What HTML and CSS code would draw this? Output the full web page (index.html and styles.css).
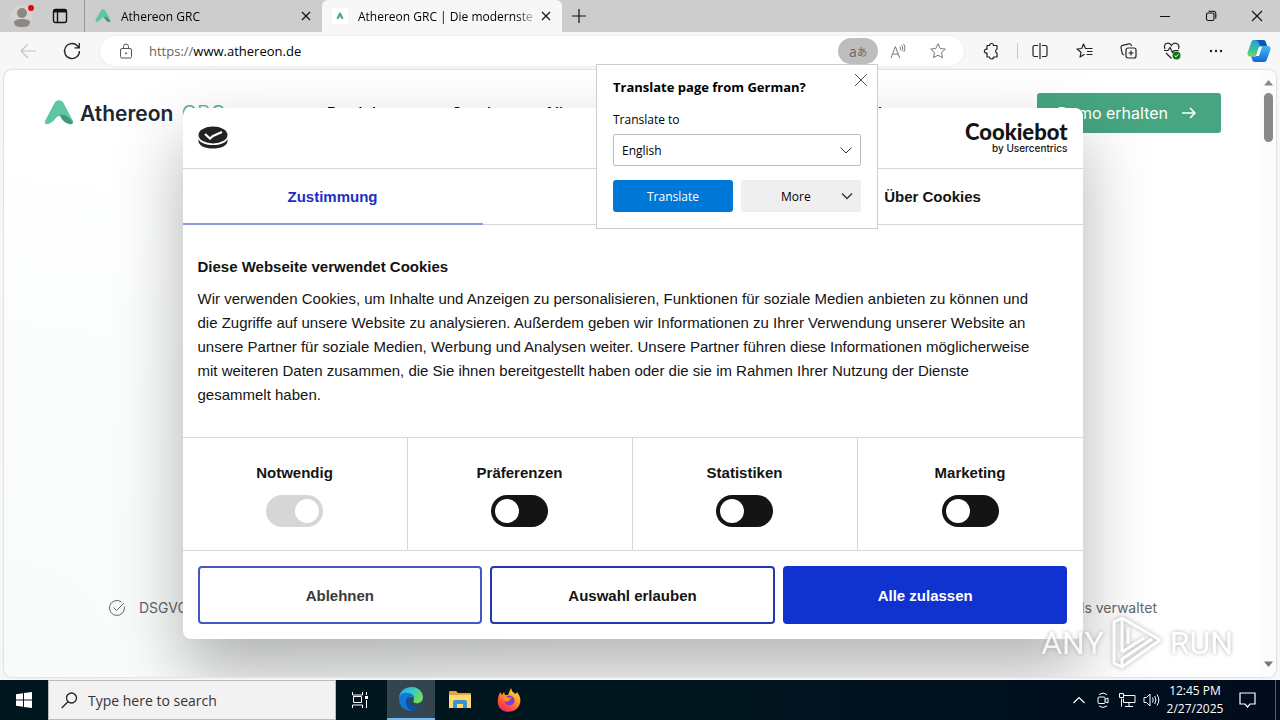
FILE: index.html
```html
<!DOCTYPE html>
<html lang="de">
<head>
    <meta charset="UTF-8">
    <meta name="viewport" content="width=device-width, initial-scale=1.0">
    <title>Athereon GRC</title>
    <link rel="stylesheet" href="styles.css">
</head>
<body>

<!-- Tabs -->
<div class="tab-strip">
    <button class="profile" aria-label="Profile">
        <svg width="24" height="24" viewBox="0 0 24 24"><circle cx="12" cy="12" r="11" fill="#d6d2d0"/><circle cx="12" cy="9" r="5" fill="#8c8886"/><path d="M4 18c0-4 16-4 16 0s-3 5-8 5-8-1-8-5z" fill="#8c8886"/><circle cx="21" cy="4" r="3" fill="#e30613"/></svg>
    </button>
    <button class="workspace" aria-label="Tab actions">
        <svg width="16" height="16" viewBox="0 0 16 16" fill="none" stroke="#111" stroke-width="1.4"><rect x="1.500" y="1.500" width="13" height="13" rx="2"/><path d="M1.500 3.500h13M5.500 4v10" /><path d="M2 3h12" stroke-width="2.500"/></svg>
    </button>
    <div class="tab">
        <svg class="favicon" width="16" height="16" viewBox="0 0 30 26"><path d="M10 4c2-5 8-5 10 0l9 17c1 3-2 4-4 3l-9-8c-4-1-5 6-12 8-2 1-4-1-3-3z" fill="#5fc5a2"/><path d="M17 15c4-2 8 2 12 8-2 3-9 1-12-8z" fill="#3e9a78"/></svg>
        <span class="tab-title">Athereon GRC</span>
        <button class="tab-close" aria-label="Close tab"><svg width="10" height="10" viewBox="0 0 10 10" stroke="#111" stroke-width="1.2"><path d="M1 1l8 8M9 1L1 9"/></svg></button>
    </div>
    <div class="tab active">
        <span class="favicon boxed"><svg width="8" height="8" viewBox="0 0 30 26"><path d="M11 3c2-4 6-4 8 0l10 20h-9l-5-9-5 9H1z" fill="#4aa885"/></svg></span>
        <span class="tab-title">Athereon GRC | Die modernste Lösung</span>
        <button class="tab-close" aria-label="Close tab"><svg width="10" height="10" viewBox="0 0 10 10" stroke="#111" stroke-width="1.2"><path d="M1 1l8 8M9 1L1 9"/></svg></button>
    </div>
    <button class="new-tab" aria-label="New tab"><svg width="14" height="14" viewBox="0 0 14 14" stroke="#111" stroke-width="1.2"><path d="M7 0v14M0 7h14"/></svg></button>
    <div class="window-controls">
        <button aria-label="Minimize"><svg width="12" height="12" viewBox="0 0 12 12" stroke="#111"><path d="M1 6.500h10"/></svg></button>
        <button aria-label="Restore"><svg width="12" height="12" viewBox="0 0 12 12" fill="none" stroke="#111" stroke-width="1.1"><rect x="1.500" y="3" width="7.500" height="7.500" rx="1.500"/><path d="M3.500 1.200h5a2.300 2.300 0 0 1 2.300 2.300v5"/></svg></button>
        <button aria-label="Close"><svg width="12" height="12" viewBox="0 0 12 12" stroke="#111" stroke-width="1.1"><path d="M1 1l10 10M11 1L1 11"/></svg></button>
    </div>
</div>

<!-- Toolbar -->
<div class="toolbar">
    <button class="tool" aria-label="Back"><svg width="16" height="16" viewBox="0 0 16 16" fill="none" stroke="#c4c4c4" stroke-width="1.2"><path d="M16 8H1M8 1L1 8l7 7"/></svg></button>
    <button class="tool" aria-label="Refresh"><svg width="18" height="18" viewBox="0 0 18 18" fill="none" stroke="#222" stroke-width="1.3"><path d="M16.500 9a7.500 7.500 0 1 1-2.200-5.300L16 5.500M16.300 1v4.800h-4.800"/></svg></button>
    <div class="address">
        <svg class="lock" width="14" height="16" viewBox="0 0 14 16" fill="none" stroke="#555"><rect x="1.500" y="5.500" width="11" height="9.500" rx="1.500"/><path d="M4.500 5.500V3.500a2.500 2.500 0 0 1 5 0v2"/><circle cx="7" cy="10.300" r=".6" fill="#555"/></svg>
        <a class="url" href="#"><span>https://</span>www.athereon.de</a>
        <div class="translate">
            <button class="pill" aria-label="Translate this page">a<span>あ</span></button>
            <form class="translate-popup">
                <div class="popup-title">
                    <strong>Translate page from German?</strong>
                    <button type="button" aria-label="Close"><svg width="14" height="14" viewBox="0 0 14 14" stroke="#555"><path d="M1 1l12 12M13 1L1 13"/></svg></button>
                </div>
                <label for="language">Translate to</label>
                <select id="language">
                    <option>English</option>
                    <option>German</option>
                </select>
                <div class="popup-buttons">
                    <button type="button" class="primary">Translate</button>
                    <button type="button" class="more">More<svg width="10" height="6" viewBox="0 0 10 6" fill="none" stroke="#333" stroke-width="1.3"><path d="M0 .5l5 5 5-5"/></svg></button>
                </div>
            </form>
        </div>
        <button class="address-icon" aria-label="Read aloud"><svg width="16" height="16" viewBox="0 0 18 18" fill="none" stroke="#777" stroke-width="1.1"><path d="M1 17L6 4l5 13M3 12.500h6.500M11 4c1 1 1 2.500.4 4M13 2.500c1.700 2 1.700 4.500.4 6.500M15 1c2.500 3 2 6.500.5 9"/></svg></button>
        <button class="address-icon" aria-label="Add to favorites"><svg width="16" height="16" viewBox="0 0 16 16" fill="none" stroke="#777" stroke-linejoin="round"><path d="M8 .8l2.200 4.700 5.100.6-3.800 3.500 1 5.100L8 12.200l-4.500 2.500 1-5.100L.7 6.100l5.100-.6z"/></svg></button>
    </div>
    <button class="tool" aria-label="Extensions"><svg width="16" height="16" viewBox="0 0 16 16" fill="none" stroke="#222" stroke-width="1.200" stroke-linejoin="round"><path d="M4 2.500h2.500a2 2 0 0 1 4 0H14v3.800a2 2 0 0 0 0 3.800v3.900h-3.500a2 2 0 0 1-4 0H4v-3.900a2 2 0 1 1 0-3.800z"/></svg></button>
    <span class="tool-divider"></span>
    <button class="tool" aria-label="Split screen"><svg width="16" height="16" viewBox="0 0 16 16" fill="none" stroke="#222" stroke-width="1.200"><path d="M6 2.500H2.500a1.500 1.500 0 0 0-1.500 1.500v8a1.500 1.500 0 0 0 1.500 1.500H6M10 2.500h3.500A1.500 1.500 0 0 1 15 4v8a1.500 1.500 0 0 1-1.500 1.500H10M8 0v16"/></svg></button>
    <button class="tool" aria-label="Favorites"><svg width="17" height="16" viewBox="0 0 17 16" fill="none" stroke="#222" stroke-width="1.200" stroke-linejoin="round"><path d="M8.500 11.300L4 14l1-4.700L1 6l4.700-.5L7.500 1l2 4.500h7M11 8.500h5.500M10.500 11.500h6"/></svg></button>
    <button class="tool" aria-label="Collections"><svg width="17" height="16" viewBox="0 0 17 16" fill="none" stroke="#222" stroke-width="1.200"><rect x="6" y="5" width="10" height="10" rx="2"/><path d="M11 7.500v5M8.500 10h5M4 12l-1-.5a2 2 0 0 1-.9-1.500L1 4.500A2 2 0 0 1 2.600 2.300L9 .8a2 2 0 0 1 2.300 1.500l.2.700"/></svg></button>
    <button class="tool" aria-label="Browser essentials"><svg width="18" height="17" viewBox="0 0 18 17" fill="none" stroke="#222" stroke-width="1.200"><path d="M2 6C-.5 0 6-1.500 8.500 2.500 11-1.500 17.500 0 15.500 6M3 10l5.500 5.500M1 7.500h4l2-3 2.500 5 1.700-2h4.500"/><circle cx="13.500" cy="12.500" r="4" fill="#107c10" stroke="none"/><path d="M11.700 12.500l1.300 1.300 2.300-2.400" stroke="#fff" stroke-width="1"/></svg></button>
    <button class="tool" aria-label="Settings and more"><svg width="14" height="4" viewBox="0 0 14 4" fill="#222"><circle cx="2" cy="2" r="1.200"/><circle cx="7" cy="2" r="1.200"/><circle cx="12" cy="2" r="1.200"/></svg></button>
    <button class="copilot" aria-label="Copilot">
        <svg width="24" height="24" viewBox="0 0 24 24">
            <defs>
                <linearGradient id="cp-left" x1="0" y1="0" x2="0" y2="1"><stop offset="0" stop-color="#2a9bdc"/><stop offset=".6" stop-color="#35c4a0"/><stop offset="1" stop-color="#8bd05b"/></linearGradient>
                <linearGradient id="cp-right" x1="0" y1="0" x2="0" y2="1"><stop offset="0" stop-color="#43bdf2"/><stop offset="1" stop-color="#1464d8"/></linearGradient>
            </defs>
            <path d="M7 1h9c2 0 2.500 1 3 3l1 3h-5c-2 0-3 1-3.500 3l-1.500 5c-.6 2-1.500 2.500-3 2.500H3c-2 0-3-2-2.400-4L4 4c.5-2 1.300-3 3-3z" fill="url(#cp-left)"/>
            <path d="M7 1h9c2 0 2.500 1 3 3l1 3h-5c-2 0-2.500-1-3-2-.5-2-1-4-5-4z" fill="#1456b8"/>
            <path d="M17 23H8c-2 0-2.500-1-3-3l-1-2.500h4c2 0 3-1 3.500-3L13 9.500c.6-2 1.500-2.500 3-2.500h5c2 0 3 2 2.400 4L20 20c-.5 2-1.300 3-3 3z" fill="url(#cp-right)"/>
            <path d="M12 8h3l-3 9H9z" fill="#fff"/>
        </svg>
    </button>
</div>

<!-- Website -->
<div class="viewport">
    <main class="page">
        <header class="site-header">
            <a class="logo" href="#">
                <svg width="30" height="26" viewBox="0 0 30 26"><path d="M10 4c2-5 8-5 10 0l9 17c1 3-2 4-4 3l-9-8c-4-1-5 6-12 8-2 1-4-1-3-3z" fill="#5fc5a2"/><path d="M16 15c5-1 9 2 13 8-4 3-11-1-13-8z" fill="#3e9a78"/></svg>
                <b>Athereon</b><span>GRC</span>
            </a>
            <nav class="site-nav">
                <a href="#">Produkt</a>
                <a href="#">Services</a>
                <a href="#">Alle</a>
                <a href="#">Portal</a>
            </nav>
            <a class="demo" href="#">Demo erhalten
                <svg width="14" height="12" viewBox="0 0 14 12" fill="none" stroke="#fff" stroke-width="1.500"><path d="M0 6h13M8 1l5 5-5 5"/></svg>
            </a>
        </header>

        <div class="features">
            <span><svg width="16" height="16" viewBox="0 0 16 16" fill="none" stroke="#666"><path d="M15.300 6.500A7.500 7.500 0 1 1 12.500 2M4.500 7.500L7.500 10.500 15 3"/></svg>DSGVO</span>
            <span>Tools verwaltet</span>
        </div>

        <div class="cookie-overlay">
            <section class="cookie-dialog" role="dialog" aria-label="Cookies">
                <div class="cookie-header">
                    <svg width="30" height="24" viewBox="0 0 30 24"><ellipse cx="15" cy="9" rx="14.500" ry="8.500" fill="#222"/><path d="M.5 13c3 8 26 8 29 0v2c0 10-29 10-29 0z" fill="#222"/><path d="M7 8l5 4.500 3-2.500 9-4" fill="none" stroke="#fff" stroke-width="2.200"/></svg>
                    <a class="cookiebot" href="#"><b>Cookiebot</b><span>by Usercentrics</span></a>
                </div>
                <div class="cookie-tabs">
                    <button class="selected">Zustimmung</button>
                    <button>Details</button>
                    <button>Über Cookies</button>
                </div>
                <div class="cookie-text">
                    <h2>Diese Webseite verwendet Cookies</h2>
                    <p>Wir verwenden Cookies, um Inhalte und Anzeigen zu personalisieren, Funktionen für soziale Medien anbieten zu können und<br>
                    die Zugriffe auf unsere Website zu analysieren. Außerdem geben wir Informationen zu Ihrer Verwendung unserer Website an<br>
                    unsere Partner für soziale Medien, Werbung und Analysen weiter. Unsere Partner führen diese Informationen möglicherweise<br>
                    mit weiteren Daten zusammen, die Sie ihnen bereitgestellt haben oder die sie im Rahmen Ihrer Nutzung der Dienste<br>
                    gesammelt haben.</p>
                </div>
                <div class="cookie-types">
                    <label>Notwendig<input type="checkbox" checked disabled></label>
                    <label>Präferenzen<input type="checkbox"></label>
                    <label>Statistiken<input type="checkbox"></label>
                    <label>Marketing<input type="checkbox"></label>
                </div>
                <div class="cookie-buttons">
                    <button class="deny">Ablehnen</button>
                    <button>Auswahl erlauben</button>
                    <button class="allow">Alle zulassen</button>
                </div>
            </section>
        </div>
    </main>
    <div class="scrollbar">
        <svg width="9" height="6" viewBox="0 0 9 6"><path d="M0 5.500L4.500 0 9 5.500z" fill="#888"/></svg>
        <span class="thumb"></span>
        <svg width="9" height="6" viewBox="0 0 9 6"><path d="M0 .5L4.500 6 9 .5z" fill="#777"/></svg>
    </div>
</div>

<div class="watermark">
    <span>ANY</span>
    <svg width="54" height="58" viewBox="0 0 54 58" fill="none" stroke="#fff" stroke-width="3" stroke-linejoin="round"><path d="M12 38V4l38 22-38 27-8-4V8l8-4M12 38l22-14M18 14v16M12 53v-8l30-20"/></svg>
    <span>RUN</span>
</div>

<!-- Taskbar -->
<footer class="taskbar">
    <button class="task start" aria-label="Start"><svg width="16" height="16" viewBox="0 0 16 16" fill="#fff"><path d="M0 2.200L7 1.200V7.500H0zM8 1l8-1v7.500H8zM0 8.500h7v6.300L0 13.800zM8 8.500h8V16l-8-1z"/></svg></button>
    <label class="search">
        <svg width="17" height="17" viewBox="0 0 17 17" fill="none" stroke="#222" stroke-width="1.300"><circle cx="10.500" cy="6" r="5"/><path d="M7 9.700L.7 16"/></svg>
        <input type="text" placeholder="Type here to search">
    </label>
    <button class="task" aria-label="Task view"><svg width="17" height="16" viewBox="0 0 17 16" fill="none" stroke="#fff"><path d="M.5 0v3h10V0M.5 16v-3h10v3M1.500 4.500h8v6h-8zM14.500 0v3M14.500 8v8"/><path d="M13 4h3v3h-3z" fill="#fff" stroke="none"/></svg></button>
    <button class="task running" aria-label="Edge">
        <svg width="24" height="24" viewBox="0 0 24 24">
            <defs>
                <linearGradient id="edge-top" x1="0" y1="0" x2="1" y2=".5"><stop offset="0" stop-color="#2aa5e0"/><stop offset=".5" stop-color="#35c8cf"/><stop offset="1" stop-color="#6fdc5c"/></linearGradient>
            </defs>
            <path d="M0 11C1-3 23-4 24 10c0 5-4 7-8 6-3-1-1-2-1-5 0-4-5-5-9-3-3 1-5 2-6 3z" fill="url(#edge-top)"/>
            <path d="M0 12c0-5 5-7 9-6 4 0 6 3 6 5-1-1-3-1-4 0-3 4 1 10 7 9 2 0 4-2 4-2-3 5-9 7-14 5-5-1-8-6-8-11z" fill="#1478d4"/>
            <path d="M9 10c-4 4-2 11 3 13.500 4 .5 8-1 10-5-3 2-7 2-10-1-2-2-2-5-1-7z" fill="#0c4f9e"/>
        </svg>
    </button>
    <button class="task" aria-label="File Explorer"><svg width="22" height="18" viewBox="0 0 22 18"><path d="M0 1q0-1 1-1h6l2 2h12q1 0 1 1v4H0z" fill="#e8a33d"/><path d="M0 4h22v13H0z" fill="#ffd970"/><path d="M4 17v-6q0-2 2-2h10q2 0 2 2v6h-4v-4H8v4z" fill="#3c92d4"/></svg></button>
    <button class="task" aria-label="Firefox">
        <svg width="24" height="24" viewBox="0 0 24 24">
            <defs>
                <linearGradient id="fox" x1=".8" y1="0" x2=".2" y2="1"><stop offset="0" stop-color="#ffe14a"/><stop offset=".4" stop-color="#ff9a26"/><stop offset=".75" stop-color="#ff4a3d"/><stop offset="1" stop-color="#e3247f"/></linearGradient>
            </defs>
            <path d="M3 4l2 3 2-3 1 3h3l3-7c1 4 3 5 5 6l1-2c3 4 4 7 3 11-2 11-20 12-22 1C0 10 2 8 3 4z" fill="url(#fox)"/>
            <circle cx="12.500" cy="12.500" r="5" fill="#7a3fd8"/><path d="M5 8c3-1 5 0 6 2l4-1-3 4c-2 1-4 1-5-1z" fill="#ff8a2a"/>
        </svg>
    </button>
    <div class="tray">
        <button aria-label="Hidden icons"><svg width="12" height="8" viewBox="0 0 12 8" fill="none" stroke="#fff" stroke-width="1.200"><path d="M.5 7L6 1.500 11.500 7"/></svg></button>
        <button aria-label="Meet now"><svg width="14" height="16" viewBox="0 0 14 16" fill="none" stroke="#fff"><rect x="2" y="5" width="7" height="6.500" rx="1"/><path d="M9 7.500l3-1.500v5l-3-1.500M3 2.500q4-3 8 0M3 14q4 3 8 0"/></svg></button>
        <button aria-label="Network"><svg width="17" height="14" viewBox="0 0 17 14" fill="none" stroke="#fff"><path d="M5 2.500h11v7H4.500v-4M10 9.500v4M6 13.500h8M2.500 5.500v8M.5.500h4v4h-4z"/></svg></button>
        <button aria-label="Volume"><svg width="17" height="14" viewBox="0 0 17 14" fill="none" stroke="#fff"><path d="M1 4.500h2.500L7 1v12L3.500 9.500H1zM9.500 4.500q1.500 2.500 0 5M11.700 3q2.500 4 0 8M14 1.500q3.700 5.500 0 11"/></svg></button>
        <div class="clock"><span>12:45 PM</span><span>2/27/2025</span></div>
        <button class="notifications" aria-label="Notifications"><svg width="17" height="16" viewBox="0 0 17 16" fill="none" stroke="#fff" stroke-width="1.200"><path d="M1 1h15v11h-5l-2.500 3L6 12H1z"/></svg></button>
    </div>
</footer>

</body>
</html>
```

FILE: styles.css
```css
* {
    box-sizing: border-box;
}

body {
    margin: 0;
    height: 100vh;
    display: flex;
    flex-direction: column;
    position: relative;
    overflow: hidden;
    background-color: #f7f7f7;
    color: #000;
    font-family: 'Open Sans', 'Noto Sans', sans-serif;
    font-size: 12px;
}

button,
input,
select {
    font: inherit;
    color: inherit;
}

button {
    display: flex;
    align-items: center;
    justify-content: center;
    padding: 0;
    border: none;
    background: none;
}

a {
    color: inherit;
    text-decoration: none;
}

svg {
    flex: none;
    overflow: visible;
}

/* Tabs */
.tab-strip {
    display: flex;
    height: 32px;
    flex: none;
    background-color: #cdcdcd;
}

.profile {
    width: 44px;
}

.workspace {
    width: 32px;
}

.tab {
    display: flex;
    align-items: center;
    width: 238px;
    padding: 0 8px 0 10px;
    margin-left: 8px;
    border-left: 1px solid #999;
}

.tab.active {
    width: 240px;
    margin: 0;
    border: none;
    border-radius: 6px 6px 0 0;
    background-color: #f7f7f7;
}

.favicon {
    width: 16px;
    height: 16px;
    margin-right: 10px;
    flex: none;
}

.boxed {
    display: flex;
    align-items: center;
    justify-content: center;
    background-color: #fff;
}

.tab-title {
    flex: 1;
    overflow: hidden;
    white-space: nowrap;
    mask-image: linear-gradient(to right, #000 88%, transparent);
}

.tab-close {
    width: 16px;
    height: 16px;
}

.new-tab {
    width: 34px;
}

.window-controls {
    display: flex;
    margin-left: auto;
}

.window-controls button {
    width: 46px;
}

/* Toolbar */
.toolbar {
    display: flex;
    align-items: center;
    height: 38px;
    flex: none;
    padding: 0 0 0 6px;
}

.tool {
    width: 44px;
    height: 30px;
}

.tool-divider {
    width: 1px;
    height: 16px;
    margin: 0 0 0 4px;
    background-color: #c8c8c8;
}

.copilot {
    width: 42px;
}

.address {
    display: flex;
    align-items: center;
    flex: 1;
    height: 30px;
    margin: 0 5px 0 6px;
    padding: 0 6px 0 19px;
    border-radius: 15px;
    background-color: #fff;
    box-shadow: 0 0 2px #ddd;
}

.url {
    flex: 1;
    margin-left: 16px;
    font-size: 13px;
}

.url span {
    color: #666;
}

.translate {
    position: relative;
}

.pill {
    width: 40px;
    height: 26px;
    border-radius: 13px;
    background-color: #bdbdbd;
    color: #666;
    font-size: 14px;
}

.pill span {
    font-family: 'Noto Sans CJK JP', sans-serif;
    font-size: 10px;
}

.address-icon {
    width: 40px;
    height: 26px;
}

/* Translate popup */
.translate-popup {
    position: absolute;
    top: 26px;
    right: 0;
    z-index: 10;
    display: flex;
    flex-direction: column;
    width: 282px;
    padding: 8px 16px 16px;
    border: 1px solid #ccc;
    background-color: #fff;
    font-size: 12px;
}

.popup-title {
    display: flex;
    justify-content: space-between;
    font-size: 13px;
    line-height: 28px;
}

.popup-title button {
    width: 14px;
    height: 14px;
    margin-right: -7px;
}

.translate-popup label {
    margin: 9px 0 4px;
    line-height: 20px;
}

.translate-popup select {
    height: 32px;
    padding: 0 8px;
    border: 1px solid #bbb;
    border-radius: 2px;
    appearance: none;
    background: url("data:image/svg+xml,%3Csvg xmlns='http://www.w3.org/2000/svg' width='12' height='7' fill='none' stroke='%23333'%3E%3Cpath d='M.5.5L6 6 11.500.5'/%3E%3C/svg%3E") no-repeat right 8px center;
}

.popup-buttons {
    display: grid;
    grid-template-columns: 1fr 1fr;
    gap: 8px;
    margin-top: 14px;
}

.popup-buttons button {
    height: 32px;
    border-radius: 3px;
    background-color: #efefef;
}

.popup-buttons .primary {
    background-color: #0078d7;
    color: #fff;
}

.popup-buttons .more {
    padding: 0 9px 0 40px;
    justify-content: space-between;
}

/* Website */
.viewport {
    display: flex;
    flex: 1;
    min-height: 0;
    margin: 0 4px 3px;
    overflow: hidden;
    border-radius: 8px;
    background-color: #fff;
    box-shadow: 0 0 2px #aaa;
}

.page {
    position: relative;
    display: flex;
    flex-direction: column;
    flex: 1;
    overflow: hidden;
    background-image: radial-gradient(circle at bottom left, #f6fbf9, transparent 40%);
    font-family: Inter, sans-serif;
}

.site-header {
    display: flex;
    align-items: center;
    padding: 23px 40px;
}

.logo {
    display: flex;
    align-items: center;
    color: #1c2733;
    font-size: 21px;
}

.logo b {
    margin: 0 8px 0 6px;
    font-weight: 600;
}

.logo span {
    color: #4fae8b;
    font-weight: 300;
}

.site-nav {
    display: grid;
    grid-template-columns: 125px 92px 1fr auto;
    flex: 1;
    margin: 0 155px 0 101px;
    font-size: 16px;
    font-weight: 500;
}

.demo {
    display: flex;
    align-items: center;
    gap: 14px;
    height: 40px;
    padding: 0 25px 0 20px;
    border-radius: 3px;
    background-color: #47a581;
    color: #fff;
    font-size: 16px;
}

.features {
    display: flex;
    justify-content: space-between;
    margin-top: auto;
    padding: 0 104px 59px 105px;
    color: #666;
    font-size: 14px;
    line-height: 20px;
}

.features span {
    display: flex;
    align-items: center;
    gap: 14px;
}

.scrollbar {
    display: flex;
    flex-direction: column;
    align-items: center;
    width: 15px;
    padding: 10px 0;
    background-color: #fcfcfc;
}

.thumb {
    width: 9px;
    height: 49px;
    margin: 7px 0 auto;
    border-radius: 5px;
    background-color: #8a8a8a;
}

/* Cookie dialog */
.cookie-overlay {
    position: absolute;
    inset: 0;
    display: flex;
    align-items: center;
    justify-content: center;
}

.cookie-dialog {
    width: 900px;
    max-width: 100%;
    border-radius: 8px;
    background-color: #fff;
    box-shadow: 0 32px 68px rgba(0, 0, 0, 0.3);
    color: #141414;
    font-family: 'Liberation Sans', Arial, sans-serif;
    font-size: 15px;
}

.cookie-header {
    display: flex;
    align-items: center;
    justify-content: space-between;
    height: 61px;
    padding: 0 15px;
    border-bottom: 1px solid #d6d6d6;
}

.cookiebot {
    display: flex;
    flex-direction: column;
    align-items: flex-end;
    font-family: Inter, sans-serif;
}

.cookiebot b {
    font-family: Lato, sans-serif;
    font-size: 22px;
    font-weight: 900;
    line-height: 20px;
}

.cookiebot span {
    font-size: 10px;
    font-weight: 500;
    line-height: 12px;
}

.cookie-tabs {
    display: grid;
    grid-template-columns: repeat(3, 1fr);
    height: 56px;
    border-bottom: 1px solid #d6d6d6;
}

.cookie-tabs button {
    font-weight: bold;
}

.cookie-tabs .selected {
    margin-bottom: -1px;
    border-bottom: 2px solid #8f9be0;
    color: #1a2fc4;
}

.cookie-text {
    padding: 30px 15px;
    border-bottom: 1px solid #d6d6d6;
}

.cookie-text h2 {
    margin: 0 0 8px;
    font-size: 15px;
    line-height: 24px;
}

.cookie-text p {
    margin: 0;
    line-height: 24px;
}

.cookie-types {
    display: grid;
    grid-template-columns: repeat(4, 1fr);
    border-bottom: 1px solid #d6d6d6;
}

.cookie-types label {
    display: flex;
    flex-direction: column;
    align-items: center;
    gap: 10px;
    padding: 23px 0;
    border-right: 1px solid #d6d6d6;
    font-weight: bold;
    line-height: 24px;
}

.cookie-types label:last-child {
    border-right: none;
}

.cookie-types input {
    display: flex;
    align-items: center;
    width: 57px;
    height: 32px;
    margin: 0;
    padding: 0 4px;
    border-radius: 16px;
    appearance: none;
    background-color: #141414;
}

.cookie-types input::before {
    content: "";
    width: 24px;
    height: 24px;
    border-radius: 50%;
    background-color: #fff;
}

.cookie-types input:checked {
    justify-content: flex-end;
}

.cookie-types input:disabled {
    background-color: #d6d6d6;
}

.cookie-buttons {
    display: grid;
    grid-template-columns: repeat(3, 1fr);
    gap: 8px;
    padding: 15px;
}

.cookie-buttons button {
    height: 58px;
    border: 2px solid #2338b0;
    border-radius: 4px;
    font-weight: bold;
}

.cookie-buttons .deny {
    border-color: #4458c4;
    color: #3a3a3a;
}

.cookie-buttons .allow {
    border-color: #1032cf;
    background-color: #1032cf;
    color: #fff;
}

/* Watermark lies over the page */
.watermark {
    position: absolute;
    right: 47px;
    bottom: 48px;
    display: flex;
    align-items: center;
    gap: 6px;
    color: #fff;
    font-family: Roboto, sans-serif;
    font-size: 32px;
    line-height: 58px;
    opacity: 0.8;
    filter: drop-shadow(0 0 2px #999);
}

/* Taskbar */
.taskbar {
    display: flex;
    height: 40px;
    flex: none;
    background-image: linear-gradient(to right, #00161f 50%, #010b1c);
    color: #fff;
}

.task {
    width: 49px;
}

.start {
    width: 48px;
}

.running {
    margin-left: 2px;
    width: 48px;
    border-bottom: 2px solid #76b9ed;
    background-color: #33464f;
}

.search {
    display: flex;
    align-items: center;
    width: 288px;
    padding: 0 12px;
    border: 1px solid #bbb;
    background-color: #f2f2f2;
}

.search input {
    flex: 1;
    min-width: 0;
    padding: 0 10px;
    border: none;
    background: none;
    font-size: 14px;
}

.search input::placeholder {
    color: #333;
}

.tray {
    display: flex;
    align-items: center;
    margin: 0 4px 0 auto;
    padding-right: 8px;
    border-right: 1px solid #59606a;
}

.tray button {
    width: 24px;
    height: 40px;
}

.clock {
    display: flex;
    flex-direction: column;
    align-items: center;
    width: 64px;
    line-height: 18px;
}

.tray .notifications {
    width: 40px;
}
```
